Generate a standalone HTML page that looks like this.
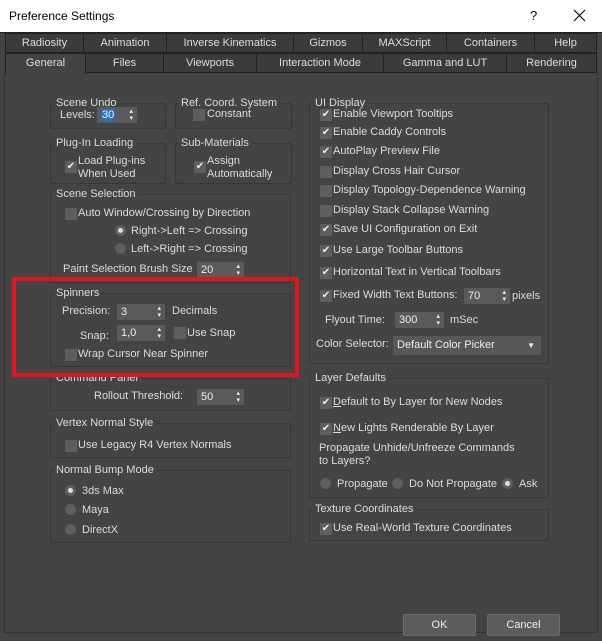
<!DOCTYPE html><html><head><style>
*{box-sizing:border-box;margin:0;padding:0}
body{width:602px;height:641px;background:#444;font-family:"Liberation Sans",sans-serif;font-size:11px;color:#dcdcdc;position:relative;overflow:hidden}
.a{position:absolute;white-space:nowrap}
.title{left:0;top:0;width:602px;height:32px;background:#fff;color:#000;font-size:12px}
.tab{position:absolute;height:20px;background:#3b3b3b;border:1px solid #222;text-align:center;line-height:18px;color:#ddd}
.g{position:absolute;border:1px solid #363636;border-radius:2px}
.gt{position:absolute;background:#444;padding:0 3px;top:-8px;left:2px;line-height:14px}
.cb{position:absolute;width:12px;height:12px;background:#5e5e5e;color:#eee;font-size:10px;line-height:12px;text-align:center}
.sp{position:absolute;height:16px;background:#5a5a5a;color:#eee;padding-left:4px;line-height:16px}
.sp.s:after{content:"▴\A▾";white-space:pre;position:absolute;right:4px;top:1px;font-size:7px;line-height:7px}
.rd{position:absolute;width:11px;height:11px;border-radius:50%;background:#5e5e5e}
.btn{position:absolute;height:22px;background:#5c5c5c;border:1px solid #6a6a6a;border-radius:2px;text-align:center;line-height:20px;color:#eee}
</style></head><body>
<div class="a title"><span class="a" style="left:9px;top:9px">Preference Settings</span><span class="a" style="left:530px;top:8px;font-size:13px">?</span>
<svg class="a" style="left:573px;top:9px" width="13" height="13"><path d="M1 1L12 12M12 1L1 12" stroke="#000" stroke-width="1.1"/></svg></div>
<div style="position:absolute;left:0;top:32px;width:602px;height:1px;background:#222"></div>
<div class="tab" style="left:5px;top:33px;width:79px">Radiosity</div>
<div class="tab" style="left:83px;top:33px;width:84px">Animation</div>
<div class="tab" style="left:166px;top:33px;width:128px">Inverse Kinematics</div>
<div class="tab" style="left:293px;top:33px;width:70px">Gizmos</div>
<div class="tab" style="left:362px;top:33px;width:85px">MAXScript</div>
<div class="tab" style="left:446px;top:33px;width:89px">Containers</div>
<div class="tab" style="left:534px;top:33px;width:63px">Help</div>
<div class="tab" style="left:5px;top:53px;width:81px;background:#444;border-bottom:none;height:21px">General</div>
<div class="tab" style="left:85px;top:53px;width:79px">Files</div>
<div class="tab" style="left:163px;top:53px;width:94px">Viewports</div>
<div class="tab" style="left:256px;top:53px;width:128px">Interaction Mode</div>
<div class="tab" style="left:383px;top:53px;width:124px">Gamma and LUT</div>
<div class="tab" style="left:506px;top:53px;width:91px">Rendering</div>
<div style="position:absolute;left:4px;top:73px;width:594px;height:560px;border:1px solid #333;border-top:none"></div>

<div class="g" style="left:50px;top:103px;width:116px;height:26px"><span class="gt">Scene Undo</span></div>
<span class="a" style="left:60px;top:109px">Levels:</span><div class="sp s" style="left:97px;top:107px;width:40px"><span style="background:#2a70c8;padding:0 1px">30</span></div>
<div class="g" style="left:175px;top:103px;width:117px;height:26px"><span class="gt">Ref. Coord. System</span></div>
<div class="cb" style="left:193px;top:109px"></div><span class="a" style="left:207px;top:108px">Constant</span>

<div class="g" style="left:50px;top:143px;width:116px;height:41px"><span class="gt">Plug-In Loading</span></div>
<div class="cb" style="left:65px;top:161px">✔</div><span class="a" style="left:78px;top:155px;line-height:13px">Load Plug-ins<br>When Used</span>
<div class="g" style="left:175px;top:143px;width:117px;height:41px"><span class="gt">Sub-Materials</span></div>
<div class="cb" style="left:194px;top:161px">✔</div><span class="a" style="left:207px;top:155px;line-height:13px">Assign<br>Automatically</span>

<div class="g" style="left:50px;top:194px;width:241px;height:89px"><span class="gt">Scene Selection</span></div>
<div class="cb" style="left:65px;top:208px"></div><span class="a" style="left:78px;top:207px">Auto Window/Crossing by Direction</span>
<div class="rd" style="left:115px;top:225px;background:#ddd;border:3px solid #5e5e5e"></div><span class="a" style="left:131px;top:225px">Right-&gt;Left =&gt; Crossing</span>
<div class="rd" style="left:115px;top:243px"></div><span class="a" style="left:131px;top:243px">Left-&gt;Right =&gt; Crossing</span>
<span class="a" style="left:63px;top:263px">Paint Selection Brush Size</span><div class="sp s" style="left:197px;top:262px;width:47px">20</div>

<div class="g" style="left:50px;top:293px;width:241px;height:74px"><span class="gt">Spinners</span></div>
<span class="a" style="left:62px;top:305px">Precision:</span><div class="sp s" style="left:117px;top:304px;width:48px">3</div><span class="a" style="left:172px;top:305px">Decimals</span>
<span class="a" style="left:80px;top:330px">Snap:</span><div class="sp s" style="left:117px;top:325px;width:48px">1,0</div>
<div class="cb" style="left:174px;top:327px"></div><span class="a" style="left:187px;top:327px">Use Snap</span>
<div class="cb" style="left:65px;top:349px"></div><span class="a" style="left:78px;top:348px">Wrap Cursor Near Spinner</span>

<div class="g" style="left:50px;top:378px;width:241px;height:33px"><span class="gt">Command Panel</span></div>
<span class="a" style="left:94px;top:390px">Rollout Threshold:</span><div class="sp s" style="left:197px;top:389px;width:47px">50</div>

<div class="g" style="left:50px;top:423px;width:241px;height:35px"><span class="gt">Vertex Normal Style</span></div>
<div class="cb" style="left:65px;top:440px"></div><span class="a" style="left:78px;top:439px">Use Legacy R4 Vertex Normals</span>

<div class="g" style="left:50px;top:470px;width:241px;height:73px"><span class="gt">Normal Bump Mode</span></div>
<div class="rd" style="left:65px;top:485px;background:#ddd;border:3px solid #5e5e5e"></div><span class="a" style="left:82px;top:485px">3ds Max</span>
<div class="rd" style="left:65px;top:504px"></div><span class="a" style="left:82px;top:504px">Maya</span>
<div class="rd" style="left:65px;top:524px"></div><span class="a" style="left:82px;top:524px">DirectX</span>

<div class="g" style="left:309px;top:103px;width:240px;height:261px"><span class="gt">UI Display</span></div>
<div class="cb" style="left:320px;top:109px">✔</div><span class="a" style="left:333px;top:108px">Enable Viewport Tooltips</span>
<div class="cb" style="left:320px;top:127px">✔</div><span class="a" style="left:333px;top:126px">Enable Caddy Controls</span>
<div class="cb" style="left:320px;top:146px">✔</div><span class="a" style="left:333px;top:145px">AutoPlay Preview File</span>
<div class="cb" style="left:320px;top:166px"></div><span class="a" style="left:333px;top:165px">Display Cross Hair Cursor</span>
<div class="cb" style="left:320px;top:185px"></div><span class="a" style="left:333px;top:184px">Display Topology-Dependence Warning</span>
<div class="cb" style="left:320px;top:205px"></div><span class="a" style="left:333px;top:204px">Display Stack Collapse Warning</span>
<div class="cb" style="left:320px;top:224px">✔</div><span class="a" style="left:333px;top:223px">Save UI Configuration on Exit</span>
<div class="cb" style="left:320px;top:245px">✔</div><span class="a" style="left:333px;top:244px">Use Large Toolbar Buttons</span>
<div class="cb" style="left:320px;top:267px">✔</div><span class="a" style="left:333px;top:266px">Horizontal Text in Vertical Toolbars</span>
<div class="cb" style="left:320px;top:290px">✔</div><span class="a" style="left:333px;top:289px">Fixed Width Text Buttons:</span><div class="sp s" style="left:464px;top:288px;width:46px">70</div><span class="a" style="left:512px;top:290px">pixels</span>
<span class="a" style="left:325px;top:314px">Flyout Time:</span><div class="sp s" style="left:395px;top:312px;width:49px">300</div><span class="a" style="left:450px;top:314px">mSec</span>
<span class="a" style="left:316px;top:338px">Color Selector:</span><div class="sp" style="left:393px;top:336px;width:148px;height:19px;line-height:19px;background:#575757">Default Color Picker<span class="a" style="right:6px;top:0;font-size:8px">▼</span></div>

<div class="g" style="left:309px;top:378px;width:240px;height:120px"><span class="gt">Layer Defaults</span></div>
<div class="cb" style="left:320px;top:397px">✔</div><span class="a" style="left:333px;top:396px"><u>D</u>efault to By Layer for New Nodes</span>
<div class="cb" style="left:320px;top:423px">✔</div><span class="a" style="left:333px;top:422px"><u>N</u>ew Lights Renderable By Layer</span>
<span class="a" style="left:319px;top:442px;line-height:13px">Propagate Unhide/Unfreeze Commands<br>to Layers?</span>
<div class="rd" style="left:320px;top:478px"></div><span class="a" style="left:337px;top:478px">Propagate</span>
<div class="rd" style="left:392px;top:478px"></div><span class="a" style="left:409px;top:478px">Do Not Propagate</span>
<div class="rd" style="left:502px;top:478px;background:#ddd;border:3px solid #5e5e5e"></div><span class="a" style="left:519px;top:478px">Ask</span>

<div class="g" style="left:309px;top:509px;width:240px;height:32px"><span class="gt">Texture Coordinates</span></div>
<div class="cb" style="left:320px;top:523px">✔</div><span class="a" style="left:333px;top:522px">Use Real-World Texture Coordinates</span>

<div style="position:absolute;left:12px;top:277px;width:287px;height:100px;border:4px solid #e0161e"></div>
<div class="btn" style="left:403px;top:614px;width:73px">OK</div>
<div class="btn" style="left:487px;top:614px;width:73px">Cancel</div>
</body></html>
